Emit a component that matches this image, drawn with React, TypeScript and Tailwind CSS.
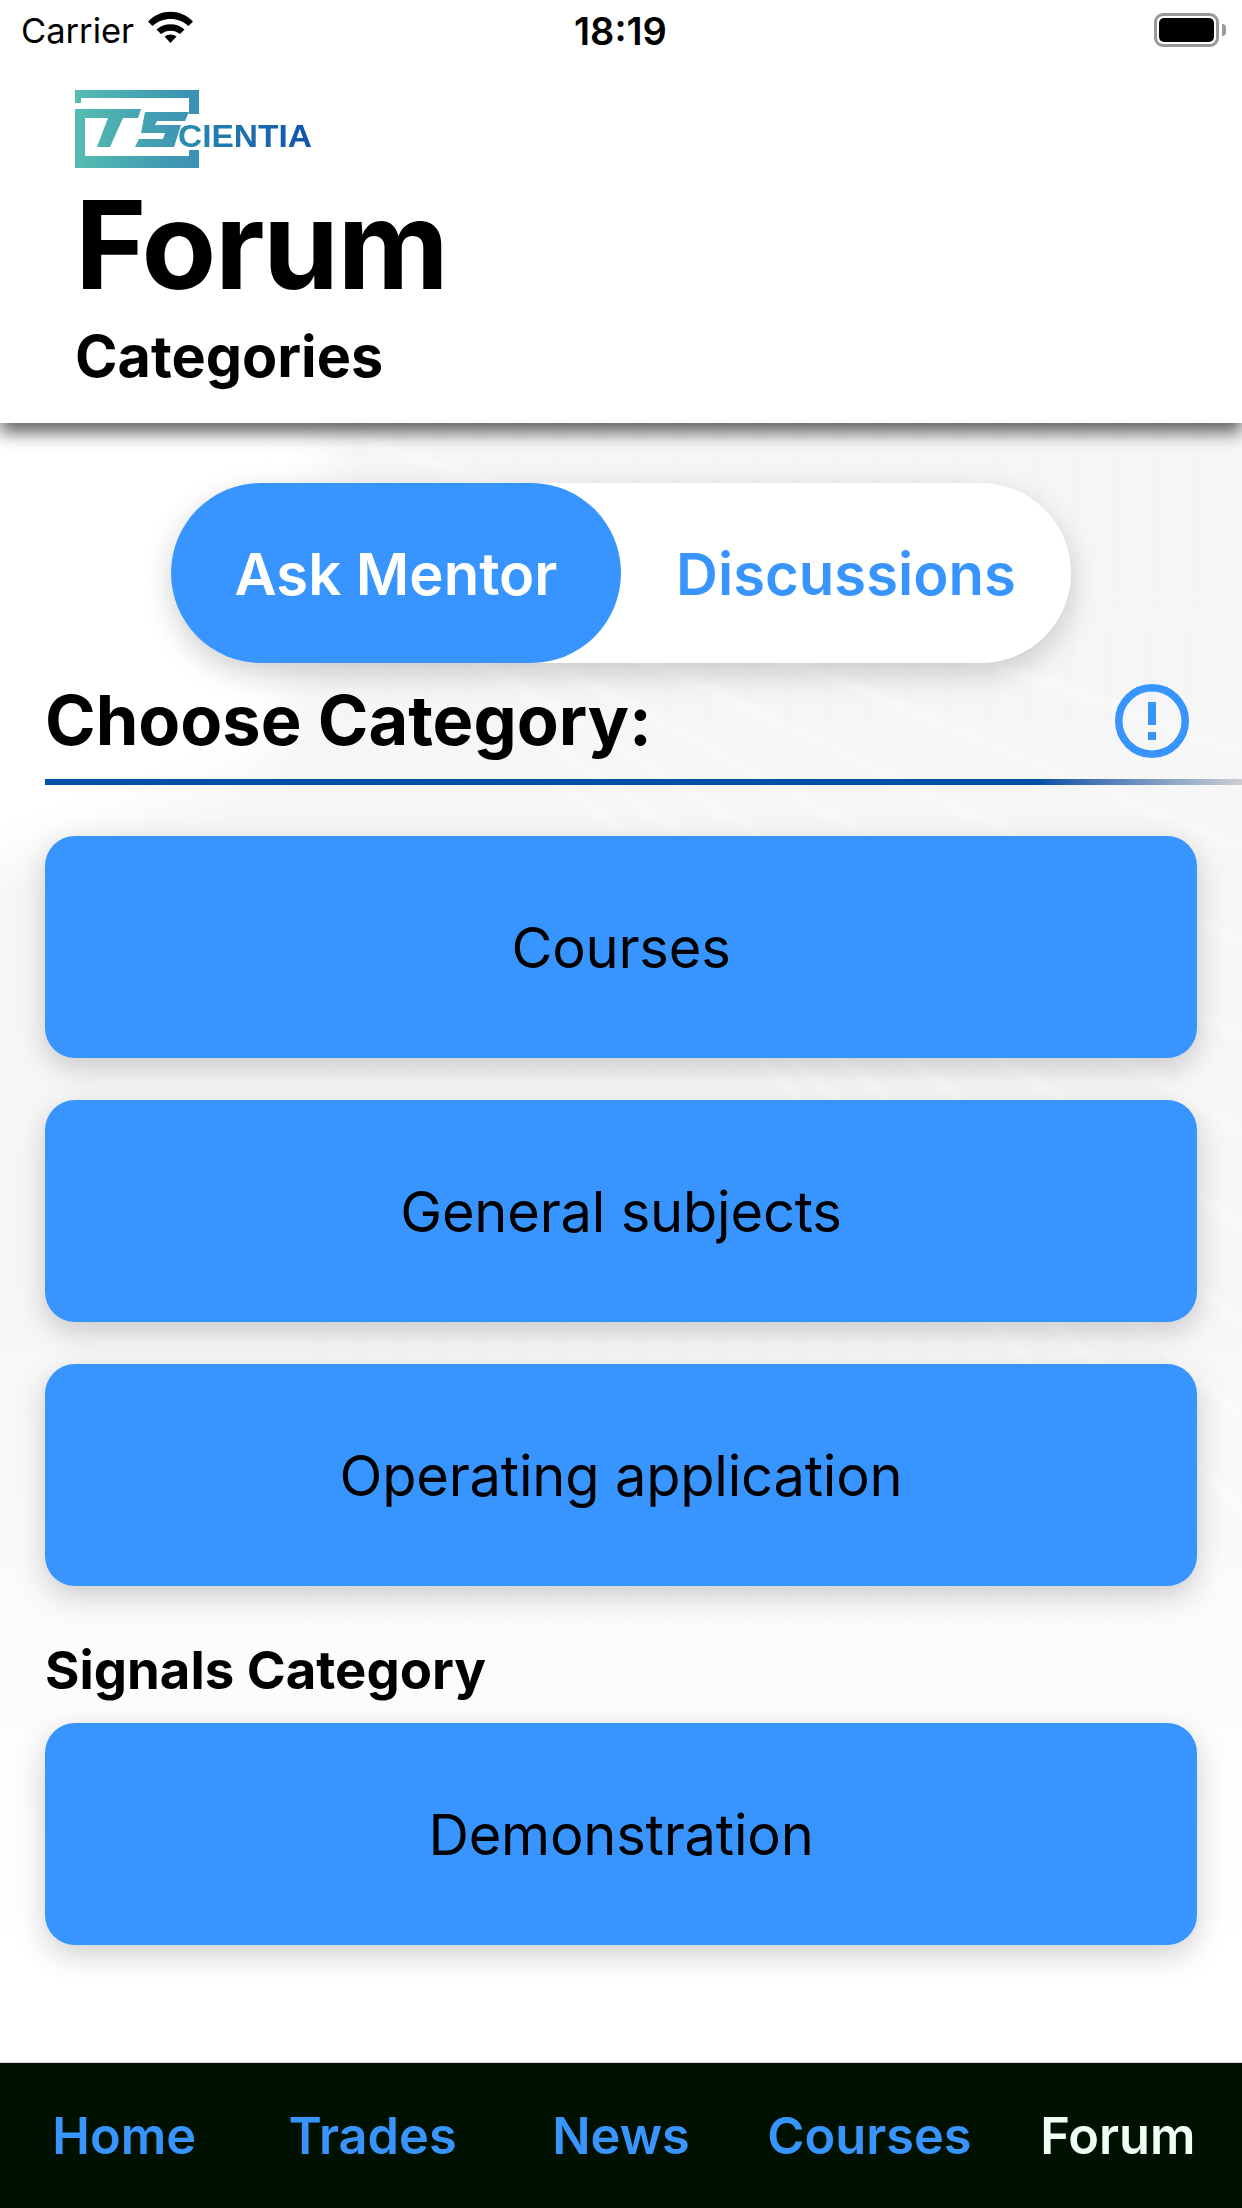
import React from "react";

function Wifi() {
  return (
    <svg width="45" height="32" viewBox="0 0 45 32" className="ml-[14px] mt-[-8px]">
      <path d="M0 10.5 C12.5 -2.5 32.5 -2.5 45 10.5 L40.5 15 C30.5 5.5 14.5 5.5 4.5 15 Z" fill="#000" />
      <path d="M8.5 18.5 C16 11.5 29 11.5 36.5 18.5 L32 23 C26.5 18.5 18.5 18.5 13 23 Z" fill="#000" />
      <path d="M16.5 25.5 C20 22.8 25 22.8 28.5 25.5 L22.5 32 Z" fill="#000" />
    </svg>
  );
}

function Battery() {
  return (
    <div className="flex items-center mt-[-2px]">
      <div className="w-[65px] h-[34px] rounded-[9px] border-[3px] border-[#999] p-[2px] bg-white">
        <div className="w-full h-full rounded-[5px] bg-black" />
      </div>
      <div className="w-[4px] h-[12px] ml-[3px] rounded-r-[4px] bg-[#999]" />
    </div>
  );
}

function Logo() {
  return (
    <svg width="240" height="78" viewBox="0 0 240 78" className="block blur-[0.5px]">
      <defs>
        <linearGradient id="lg" gradientUnits="userSpaceOnUse" x1="0" x2="124" y1="0" y2="0">
          <stop offset="0" stopColor="#54bdb0" />
          <stop offset="1" stopColor="#3a8fb4" />
        </linearGradient>
        <linearGradient id="lg2" gradientUnits="userSpaceOnUse" x1="103" x2="237" y1="0" y2="0">
          <stop offset="0" stopColor="#2a8fb0" />
          <stop offset="1" stopColor="#0f52ad" />
        </linearGradient>
      </defs>
      <path d="M0 0H124V24H114V8H6V13H0Z" fill="url(#lg)" />
      <path d="M0 19H66L63 28H10V66H124V78H0Z" fill="url(#lg)" />
      <path d="M114 60H124V78H114Z" fill="url(#lg)" />
      <path d="M33 28H48L35 57H22Z" fill="url(#lg)" />
      <path d="M70 22H114L110 31H82L80 35H106L99 57H60L64 49H88L90 43H66Z" fill="url(#lg)" />
      <text x="103" y="57" fontFamily="'Liberation Sans', sans-serif" fontWeight="700" fontSize="32" textLength="134" lengthAdjust="spacingAndGlyphs" fill="url(#lg2)">CIENTIA</text>
    </svg>
  );
}

function Alert() {
  return (
    <svg width="74" height="74" viewBox="0 0 74 74">
      <circle cx="37" cy="37" r="33.25" fill="none" stroke="#3895ff" strokeWidth="7.5" />
      <rect x="33" y="18" width="8" height="23" fill="#3895ff" />
      <rect x="33" y="48" width="8" height="8" fill="#3895ff" />
    </svg>
  );
}

function Backdrop() {
  const diag = [];
  for (let i = 0; i < 10; i++) {
    diag.push(<path key={"a" + i} d={`M${320 + i * 40} ${i * 60} L1242 ${330 + i * 95}`} stroke="#ffffff" strokeWidth="8" opacity="0.4" fill="none" />);
  }
  const vert = [];
  for (let i = 0; i < 22; i++) {
    vert.push(<path key={"b" + i} d={`M${360 + i * 40} 0 L${300 + i * 40} 1400`} stroke="#eeeeee" strokeWidth="3" opacity="0.4" fill="none" />);
  }
  return (
    <svg className="absolute inset-0 w-full h-full" viewBox="0 0 1242 1640" preserveAspectRatio="none">
      <defs>
        <linearGradient id="fade" x1="0" x2="0" y1="0" y2="1">
          <stop offset="0" stopColor="#fff" stopOpacity="0" />
          <stop offset="0.55" stopColor="#fff" stopOpacity="0.15" />
          <stop offset="0.85" stopColor="#fff" stopOpacity="0.85" />
          <stop offset="1" stopColor="#fff" stopOpacity="1" />
        </linearGradient>
        <filter id="soft" x="-10%" y="-10%" width="120%" height="120%">
          <feGaussianBlur stdDeviation="24" />
        </filter>
        <filter id="softer" x="-10%" y="-10%" width="120%" height="120%">
          <feGaussianBlur stdDeviation="3" />
        </filter>
      </defs>
      <path d="M330 0H1300V1500H-60V460L270 340Z" fill="#f6f6f6" filter="url(#soft)" />
      <g filter="url(#softer)">
        {vert}
        {diag}
      </g>
      <rect width="1242" height="1640" fill="url(#fade)" />
    </svg>
  );
}

function Cat({ label }: { label: string }) {
  return (
    <div className="h-[222px] rounded-[30px] bg-[#3895ff] flex items-center justify-center pt-[2px] text-[56px] leading-none tracking-[-0.2px] text-black shadow-[0_10px_30px_rgba(0,0,0,0.19)]">
      {label}
    </div>
  );
}

export default function App() {
  return (
    <div className="w-[1242px] h-[2208px] flex flex-col overflow-hidden bg-white font-['Inter',sans-serif] text-black">
      <header className="relative z-10 h-[423px] bg-white shadow-[0_10px_16px_rgba(0,0,0,0.6)]">
        <div className="relative h-[62px] flex items-center justify-between pl-[21px] pr-[16px]">
          <div className="flex items-center">
            <span className="text-[34.5px] leading-none">Carrier</span>
            <Wifi />
          </div>
          <span className="absolute left-[574px] top-[12px] text-[38px] leading-none font-semibold">18:19</span>
          <Battery />
        </div>
        <div className="pl-[75px] pt-[28px]">
          <Logo />
        </div>
        <h1 className="pl-[75px] mt-[8px] text-[122px] leading-[138px] font-bold tracking-[-1.5px]">Forum</h1>
        <p className="pl-[75px] mt-[9px] text-[57.5px] leading-[66px] font-bold">Categories</p>
      </header>

      <main className="relative flex-1">
        <Backdrop />
        <div className="relative px-[45px] pt-[60px]">
          <div className="mx-auto w-[900px] h-[180px] grid grid-cols-2 rounded-full bg-white text-[58px] font-semibold shadow-[0_10px_30px_rgba(0,0,0,0.19)]">
            <div className="rounded-full bg-[#3895ff] text-white flex items-center justify-center pt-[2px]">Ask Mentor</div>
            <div className="text-[#3895ff] flex items-center justify-center pt-[2px]">Discussions</div>
          </div>

          <div className="flex items-center justify-between h-[116px] pr-[8px]">
            <h2 className="text-[68.5px] leading-none font-bold">Choose Category:</h2>
            <Alert />
          </div>
          <div className="h-[6px] mr-[-45px] bg-gradient-to-r from-[#0050a8] from-[83%] to-[#cdcfd2]" />

          <div className="flex flex-col gap-[42px] mt-[51px]">
            <Cat label="Courses" />
            <Cat label="General subjects" />
            <Cat label="Operating application" />
          </div>
          <h3 className="h-[137px] flex items-center pt-[32px] text-[52.7px] font-bold">Signals Category</h3>
          <Cat label="Demonstration" />
        </div>
      </main>

      <nav className="relative z-10 h-[146px] grid grid-cols-5 items-center bg-[#001100] text-[50.5px] font-semibold text-center text-[#3895ff] border-t border-[#d8d8d8]">
        <span>Home</span>
        <span>Trades</span>
        <span>News</span>
        <span>Courses</span>
        <span className="text-[#f0fff6]">Forum</span>
      </nav>
    </div>
  );
}
